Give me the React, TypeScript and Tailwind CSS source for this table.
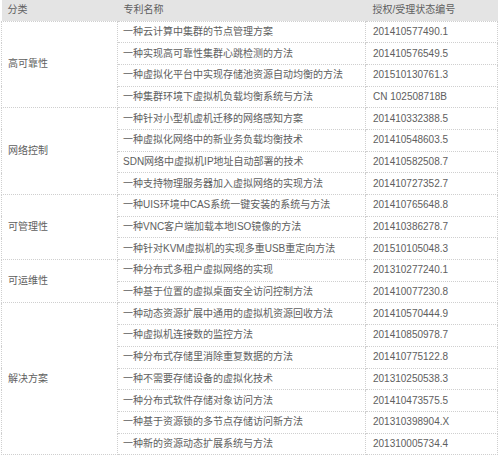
import React from "react";

const groups: { cat: string; rows: [string, string][] }[] = [
  {
    cat: "高可靠性",
    rows: [
      ["一种云计算中集群的节点管理方案", "201410577490.1"],
      ["一种实现高可靠性集群心跳检测的方法", "201410576549.5"],
      ["一种虚拟化平台中实现存储池资源自动均衡的方法", "201510130761.3"],
      ["一种集群环境下虚拟机负载均衡系统与方法", "CN 102508718B"],
    ],
  },
  {
    cat: "网络控制",
    rows: [
      ["一种针对小型机虚机迁移的网络感知方案", "201410332388.5"],
      ["一种虚拟化网络中的新业务负载均衡技术", "201410548603.5"],
      ["SDN网络中虚拟机IP地址自动部署的技术", "201410582508.7"],
      ["一种支持物理服务器加入虚拟网络的实现方法", "201410727352.7"],
    ],
  },
  {
    cat: "可管理性",
    rows: [
      ["一种UIS环境中CAS系统一键安装的系统与方法", "201410765648.8"],
      ["一种VNC客户端加载本地ISO镜像的方法", "201410386278.7"],
      ["一种针对KVM虚拟机的实现多重USB重定向方法", "201510105048.3"],
    ],
  },
  {
    cat: "可运维性",
    rows: [
      ["一种分布式多租户虚拟网络的实现", "201310277240.1"],
      ["一种基于位置的虚拟桌面安全访问控制方法", "201410077230.8"],
    ],
  },
  {
    cat: "解决方案",
    rows: [
      ["一种动态资源扩展中通用的虚拟机资源回收方法", "201410570444.9"],
      ["一种虚拟机连接数的监控方法", "201410850978.7"],
      ["一种分布式存储里消除重复数据的方法", "201410775122.8"],
      ["一种不需要存储设备的虚拟化技术", "201310250538.3"],
      ["一种分布式软件存储对象访问方法", "201410473575.5"],
      ["一种基于资源锁的多节点存储访问新方法", "201310398904.X"],
      ["一种新的资源动态扩展系统与方法", "201310005734.4"],
    ],
  },
];

const font = {
  fontFamily: '"Liberation Sans", "Noto Sans CJK SC", sans-serif',
};

export default function App() {
  return (
    <div className="w-[500px] h-[456px] bg-white overflow-hidden" style={font}>
      <table className="ml-[1px] w-[497px] border-collapse table-fixed text-[10px] text-[#5e5e5e] leading-none">
        <colgroup>
          <col className="w-[116px]" />
          <col className="w-[248px]" />
          <col />
        </colgroup>
        <thead>
          <tr className="h-[21px] bg-[#e4e4e4]">
            <th className="text-left font-normal pl-[6px]">分类</th>
            <th className="text-left font-normal pl-[6px]">专利名称</th>
            <th className="text-left font-normal pl-[7px]">授权/受理状态编号</th>
          </tr>
        </thead>
        <tbody>
          {groups.map((g) =>
            g.rows.map((r, i) => (
              <tr key={g.cat + i} className="h-[21.7px]">
                {i === 0 && (
                  <td
                    rowSpan={g.rows.length}
                    className="border border-dotted border-[#cfcfcf] pl-[6px] align-middle text-[10px]"
                  >
                    {g.cat}
                  </td>
                )}
                <td className="border border-dotted border-[#cfcfcf] pl-[5px] whitespace-nowrap overflow-hidden">
                  {r[0]}
                </td>
                <td className="border border-dotted border-[#cfcfcf] pl-[7px] whitespace-nowrap">
                  {r[1]}
                </td>
              </tr>
            ))
          )}
        </tbody>
      </table>
    </div>
  );
}
